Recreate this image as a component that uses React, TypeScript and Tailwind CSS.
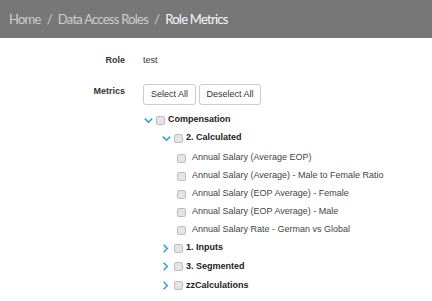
const items = [
  'Annual Salary (Average EOP)',
  'Annual Salary (Average) - Male to Female Ratio',
  'Annual Salary (EOP Average) - Female',
  'Annual Salary (EOP Average) - Male',
  'Annual Salary Rate - German vs Global',
];

const Box = () => (
  <span className="inline-block w-[9px] h-[9px] rounded-[2px] border border-[#bdbdbd] bg-[#e4e4e4] shrink-0" />
);

const Chevron = ({ open }: { open: boolean }) => (
  <svg width="9" height="9" viewBox="0 0 9 9" className="shrink-0" fill="none" stroke="#2a9ee4" strokeWidth="1.5">
    {open ? <polyline points="0.8,2.6 4.5,6.3 8.2,2.6" /> : <polyline points="1.6,0.8 5.3,4.5 1.6,8.2" />}
  </svg>
);

const Node = ({ label, open, indent, h }: { label: string; open: boolean; indent: string; h: string }) => (
  <div className={`flex items-center ${h} ${indent}`}>
    <Chevron open={open} />
    <span className="ml-[3px] flex"><Box /></span>
    <span className="ml-[3px] font-bold text-[#222]">{label}</span>
  </div>
);

export default function App() {
  return (
    <div className="w-[432px] h-[301px] bg-white overflow-hidden font-['Liberation_Sans',Arial,sans-serif] text-[9px] text-[#333]">
      <div className="h-[38px] bg-[#777777] flex items-center pl-[9px] pt-[2px] font-['Lato','Open_Sans',sans-serif] text-[13px] tracking-[-0.75px] text-[#cdcdcd]">
        <span>Home</span>
        <span className="mx-[6px]">/</span>
        <span>Data Access Roles</span>
        <span className="mx-[6px]">/</span>
        <span className="text-[#f7f7f7]">Role Metrics</span>
      </div>

      <div className="flex mt-[15px] leading-[14px]">
        <div className="w-[125px] text-right font-bold text-[#333]">Role</div>
        <div className="ml-[18px]">test</div>
      </div>

      <div className="flex mt-[17px]">
        <div className="w-[125px] text-right font-bold text-[#333] leading-[14px]">Metrics</div>
        <div className="ml-[18px]">
          <div className="flex gap-[3px]">
            <button className="h-[21px] w-[53px] border border-[#cccccc] rounded-[3px] bg-white text-[#333]">Select All</button>
            <button className="h-[21px] w-[62px] border border-[#cccccc] rounded-[3px] bg-white text-[#333]">Deselect All</button>
          </div>
          <div className="mt-[6px]">
            <Node label="Compensation" open indent="ml-[1px]" h="h-[18px]" />
            <Node label="2. Calculated" open indent="ml-[19px]" h="h-[18px]" />
            <div className="mt-[2px]">
              {items.map((t) => (
                <div key={t} className="flex items-center h-[18px] ml-[34px] text-[#444]">
                  <Box />
                  <span className="ml-[6px]">{t}</span>
                </div>
              ))}
            </div>
            <Node label="1. Inputs" open={false} indent="ml-[19px]" h="h-[18px]" />
            <Node label="3. Segmented" open={false} indent="ml-[19px]" h="h-[19px]" />
            <Node label="zzCalculations" open={false} indent="ml-[19px]" h="h-[19px]" />
          </div>
        </div>
      </div>
    </div>
  );
}
